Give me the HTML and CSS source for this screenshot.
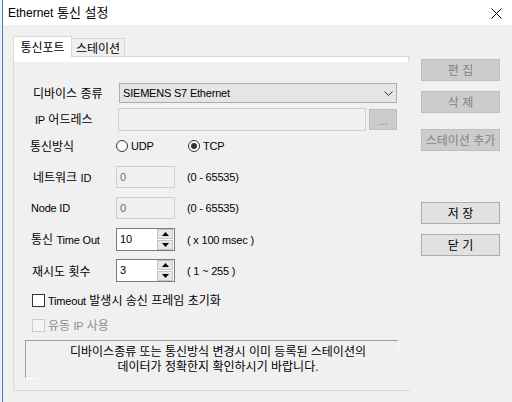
FILE: index.html
```html
<!DOCTYPE html>
<html lang="ko">
<head>
<meta charset="utf-8">
<title>Ethernet 통신 설정</title>
<link rel="stylesheet" href="styles.css">
</head>
<body>
<div class="window">
  <div class="titlebar">
    <span class="title"><span class="lt lt-title">Ethernet</span> 통신 설정</span>
    <svg class="close" width="11" height="11" viewBox="0 0 11 11"><path d="M0.5 0.5 L10.5 10.5 M10.5 0.5 L0.5 10.5" stroke="#000" stroke-width="1" fill="none"/></svg>
  </div>
  <div class="main">
    <div class="left">
      <div class="tabs">
        <div class="tab tab-active">통신포트</div>
        <div class="tab tab-idle">스테이션</div>
      </div>
      <div class="panel">
        <div class="panel-top"></div>
        <div class="page">
          <div class="row row-1">
            <span class="label pl3">디바이스 종류</span>
            <div class="combo">
              <span class="combo-text lt">SIEMENS S7 Ethernet</span>
              <svg class="chev" width="9" height="5" viewBox="0 0 9 5"><path d="M0.5 0.5 L4.5 4.5 L8.5 0.5" stroke="#333" stroke-width="1" fill="none"/></svg>
            </div>
          </div>
          <div class="row row-2">
            <span class="label pl5"><span class="lt">IP</span> 어드레스</span>
            <div class="field field-ip"></div>
            <div class="dots-btn lt">...</div>
          </div>
          <div class="row row-3">
            <span class="label">통신방식</span>
            <span class="radio radio-udp"><span class="circle"></span><span class="lt">UDP</span></span>
            <span class="radio"><span class="circle checked"></span><span class="lt">TCP</span></span>
          </div>
          <div class="row row-4">
            <span class="label pl3">네트워크 <span class="lt">ID</span></span>
            <div class="field field-id lt">0</div>
            <span class="hint lt">(0 - 65535)</span>
          </div>
          <div class="row row-5">
            <span class="label pl1 lt">Node ID</span>
            <div class="field field-id lt">0</div>
            <span class="hint lt">(0 - 65535)</span>
          </div>
          <div class="row row-6">
            <span class="label pl1">통신 <span class="lt">Time Out</span></span>
            <div class="spin">
              <span class="spin-val lt">10</span>
              <span class="spin-btns">
                <span class="spin-btn"><svg width="7" height="4" viewBox="0 0 7 4"><path d="M3.5 0 L7 4 L0 4 Z" fill="#000"/></svg></span>
                <span class="spin-btn"><svg width="7" height="4" viewBox="0 0 7 4"><path d="M0 0 L7 0 L3.5 4 Z" fill="#000"/></svg></span>
              </span>
            </div>
            <span class="hint lt">( x 100 msec )</span>
          </div>
          <div class="row row-7">
            <span class="label pl2">재시도 횟수</span>
            <div class="spin">
              <span class="spin-val lt">3</span>
              <span class="spin-btns">
                <span class="spin-btn"><svg width="7" height="4" viewBox="0 0 7 4"><path d="M3.5 0 L7 4 L0 4 Z" fill="#000"/></svg></span>
                <span class="spin-btn"><svg width="7" height="4" viewBox="0 0 7 4"><path d="M0 0 L7 0 L3.5 4 Z" fill="#000"/></svg></span>
              </span>
            </div>
            <span class="hint lt">( 1 ~ 255 )</span>
          </div>
          <div class="check check-1"><span class="box"></span><span class="check-text"><span class="lt">Timeout</span> 발생시 송신 프레임 초기화</span></div>
          <div class="check check-2 disabled"><span class="box"></span><span class="check-text">유동 <span class="lt">IP</span> 사용</span></div>
          <div class="message">
            <p>디바이스종류 또는 통신방식 변경시 이미 등록된 스테이션의</p>
            <p>데이터가 정확한지 확인하시기 바랍니다.</p>
          </div>
        </div>
      </div>
    </div>
    <div class="side">
      <div class="btn btn-off">편 집</div>
      <div class="btn btn-off gap-10">삭 제</div>
      <div class="btn btn-off gap-16">스테이션 추가</div>
      <div class="btn btn-on gap-51">저 장</div>
      <div class="btn btn-on gap-10">닫 기</div>
    </div>
  </div>
</div>
</body>
</html>
```

FILE: styles.css
```css
html, body {
  margin: 0;
  padding: 0;
  width: 512px;
  height: 402px;
  overflow: hidden;
  background: #f0f0f0;
}

body {
  font-family: "Noto Sans CJK KR", "Liberation Sans", sans-serif;
  font-size: 12px;
  color: #000;
}

.lt {
  font-family: "Liberation Sans", "Noto Sans CJK KR", sans-serif;
  font-size: 11px;
  letter-spacing: -0.2px;
}

.lt-title {
  font-size: 12px;
  letter-spacing: 0;
}

.window {
  height: 402px;
  margin-left: 2px;
  border-left: 1px solid #2b83d8;
  display: flex;
  flex-direction: column;
}

.titlebar {
  height: 25px;
  flex: none;
  background: #fff;
  display: flex;
  align-items: center;
  padding-left: 5px;
}

.title {
  font-size: 13px;
  line-height: 15px;
}

.close {
  margin-left: auto;
  margin-right: 10px;
  margin-top: 1px;
}

.main {
  display: flex;
  padding-left: 10px;
}

.left {
  width: 397px;
  padding-top: 11px;
}

.tabs {
  display: flex;
  height: 21px;
  margin-bottom: -1px;
  position: relative;
  z-index: 1;
}

.tab {
  box-sizing: border-box;
  text-align: center;
  line-height: 14px;
}

.tab-active {
  width: 59px;
  height: 21px;
  background: #fff;
  border: 1px solid #d9d9d9;
  border-bottom: none;
  padding-top: 3px;
}

.tab-idle {
  width: 53px;
  height: 18px;
  margin-top: 2px;
  background: #f0f0f0;
  border: 1px solid #d9d9d9;
  border-left: none;
  border-bottom: none;
  padding-top: 2px;
}

.panel {
  border: 1px solid #d9d9d9;
  border-right: none;
  background: #f0f0f0;
}

.panel-top {
  height: 5px;
  background: #fff;
  border-right: 1px solid #d9d9d9;
  margin-right: 1px;
}

.page {
  height: 328px;
  box-sizing: border-box;
  padding-left: 16px;
  padding-top: 21px;
}

.row {
  display: flex;
  align-items: center;
}

.label {
  width: 86px;
  flex: none;
  box-sizing: border-box;
  line-height: 14px;
}

.pl1 { padding-left: 1px; }
.pl2 { padding-left: 2px; }
.pl3 { padding-left: 3px; }
.pl5 { padding-left: 5px; }

.row-1 { height: 20px; }
.row-2 { height: 23px; margin-top: 5px; }
.row-3 { height: 23px; margin-top: 3px; }
.row-4 { height: 22px; margin-top: 9px; }
.row-5 { height: 22px; margin-top: 9px; }
.row-6 { height: 23px; margin-top: 9px; }
.row-7 { height: 23px; margin-top: 8px; }

.combo {
  width: 278px;
  height: 20px;
  margin-left: 3px;
  box-sizing: border-box;
  border: 1px solid #acacac;
  background: #e5e5e5;
  display: flex;
  align-items: center;
  padding-left: 3px;
}

.combo-text {
  line-height: 14px;
}

.chev {
  margin-left: auto;
  margin-right: 3px;
}

.field {
  box-sizing: border-box;
  border: 1px solid #cfcfcf;
  background: #f0f0f0;
  color: #6d6d6d;
  line-height: 14px;
  padding-left: 3px;
  display: flex;
  align-items: center;
}

.field-ip {
  width: 248px;
  height: 23px;
  margin-left: 2px;
}

.field-id {
  width: 59px;
  height: 22px;
}

.dots-btn {
  width: 28px;
  height: 21px;
  margin-left: 3px;
  box-sizing: border-box;
  border: 1px solid #bfbfbf;
  background: #cccccc;
  color: #838383;
  text-align: center;
  line-height: 22px;
}

.radio {
  display: flex;
  align-items: center;
  gap: 3px;
  line-height: 14px;
}

.radio-udp {
  width: 72px;
}

.circle {
  width: 12px;
  height: 12px;
  box-sizing: border-box;
  border: 1px solid #333;
  border-radius: 50%;
  background: #fff;
  display: flex;
  align-items: center;
  justify-content: center;
}

.circle.checked::after {
  content: "";
  width: 6px;
  height: 6px;
  border-radius: 50%;
  background: #333;
}

.hint {
  margin-left: 12px;
  line-height: 14px;
}

.spin {
  width: 59px;
  height: 23px;
  box-sizing: border-box;
  border: 1px solid #7a7a7a;
  background: #fff;
  display: flex;
}

.spin-val {
  flex: 1;
  padding-left: 3px;
  line-height: 21px;
}

.spin-btns {
  width: 16px;
  display: flex;
  flex-direction: column;
  gap: 1px;
  padding: 0 1px 0 0;
}

.spin-btn {
  flex: 1;
  box-sizing: border-box;
  border: 1px solid #c4c4c4;
  background: #e6e6e6;
  display: flex;
  align-items: center;
  justify-content: center;
}

.check {
  display: flex;
  align-items: center;
  height: 14px;
  margin-left: 2px;
  gap: 3px;
}

.check-text {
  line-height: 14px;
}

.check-1 { margin-top: 11px; }
.check-2 { margin-top: 11px; }

.box {
  width: 13px;
  height: 13px;
  box-sizing: border-box;
  border: 1px solid #333;
  background: #fff;
}

.check.disabled {
  color: #8d8d8d;
}

.check.disabled .box {
  border-color: #cccccc;
  background: #f4f4f4;
}

.message {
  position: relative;
  margin-top: 8px;
  margin-left: -5px;
  width: 373px;
  height: 38px;
  box-sizing: border-box;
  border-top: 1px solid #a0a0a0;
  border-left: 1px solid #a0a0a0;
  padding-top: 4px;
  padding-left: 12px;
  text-align: center;
  font-family: "Liberation Sans", "Noto Sans CJK KR", sans-serif;
}

.message p {
  margin: 0;
  line-height: 15px;
}

.message::before {
  content: "";
  position: absolute;
  left: -1px;
  bottom: -1px;
  width: 12px;
  height: 1px;
  background: #fff;
}

.message::after {
  content: "";
  position: absolute;
  right: -1px;
  top: -1px;
  width: 1px;
  height: 7px;
  background: #fff;
}

.side {
  width: 79px;
  margin-left: 11px;
  padding-top: 34px;
}

.btn {
  height: 22px;
  box-sizing: border-box;
  border: 1px solid;
  text-align: center;
  line-height: 20px;
}

.btn-off {
  background: #cccccc;
  border-color: #bfbfbf;
  color: #838383;
}

.btn-on {
  background: #e1e1e1;
  border-color: #adadad;
  color: #000;
}

.gap-10 { margin-top: 10px; }
.gap-16 { margin-top: 16px; }
.gap-51 { margin-top: 51px; }
```
